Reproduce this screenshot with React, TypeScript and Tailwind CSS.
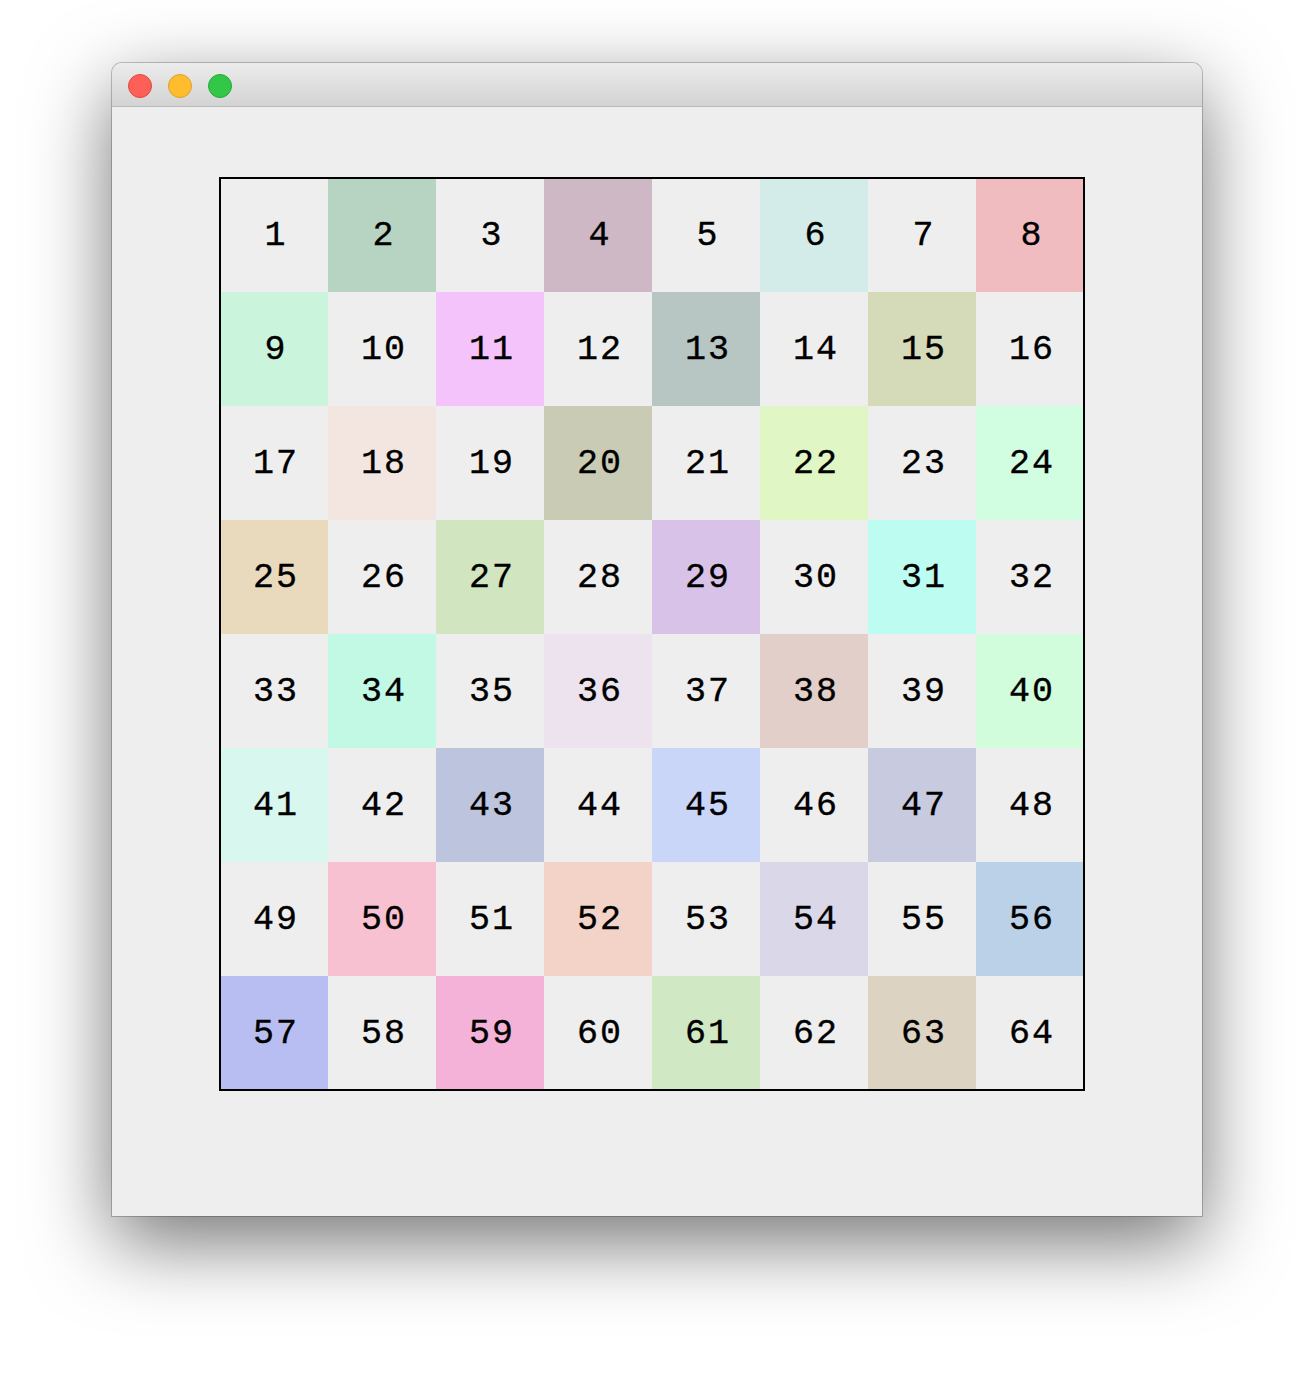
import React from "react";

const colors: (string | null)[] = [
  null, "#b7d4c3", null, "#cfb8c5", null, "#d3ebe9", null, "#f1bcc0",
  "#caf4db", null, "#f5c3fb", null, "#b7c5c3", null, "#d5dbb8", null,
  null, "#f3e6e1", null, "#c9cbb4", null, "#e0f6c4", null, "#d1fde0",
  "#e9d9bd", null, "#d1e5c0", null, "#d8c2e7", null, "#bcfcf1", null,
  null, "#c1f9e5", null, "#ede3ef", null, "#e2cfc9", null, "#d1fddc",
  "#d7f7ef", null, "#bdc4de", null, "#c9d6f8", null, "#c8cadf", null,
  null, "#f7c1d2", null, "#f3d2c7", null, "#dad8e8", null, "#bad1e8",
  "#b9bef2", null, "#f5b2d8", null, "#d0e8c4", null, "#dcd3c3", null,
];

export default function App() {
  return (
    <div className="min-h-[1376px] w-full bg-white pt-[63px] pl-[112px]">
      <div className="w-[1090px] h-[1153px] flex flex-col rounded-t-[10px] bg-[#eeeeee] shadow-[0_0_0_1px_rgba(0,0,0,0.22),0_26px_80px_rgba(0,0,0,0.55)]">
        <div className="h-[44px] shrink-0 flex items-center gap-[16px] pl-[16px] pt-[2px] rounded-t-[10px] border-b border-[#b9b9b9] bg-gradient-to-b from-[#ececec] to-[#d3d3d3]">
          <div className="w-[24px] h-[24px] rounded-full bg-[#fe5f57] border border-[#e2463f]" />
          <div className="w-[24px] h-[24px] rounded-full bg-[#febc2e] border border-[#dfa123]" />
          <div className="w-[24px] h-[24px] rounded-full bg-[#33c748] border border-[#24a93a]" />
        </div>
        <div className="flex-1 pt-[71px] pl-[108px]">
          <div className="grid grid-cols-[repeat(8,108px)] grid-rows-[repeat(8,114px)] w-[864px] h-[912px] outline-2 outline-black -outline-offset-1">
            {colors.map((c, i) => (
              <div
                key={i}
                className="flex items-center justify-center text-[35px] font-normal text-black leading-none tracking-[2px] pl-[4px] pt-[2px] [-webkit-text-stroke:0.35px_black]"
                style={{ backgroundColor: c ?? "#eeeeee", fontFamily: '"Liberation Mono", "Courier New", monospace' }}
              >
                {i + 1}
              </div>
            ))}
          </div>
        </div>
      </div>
    </div>
  );
}
